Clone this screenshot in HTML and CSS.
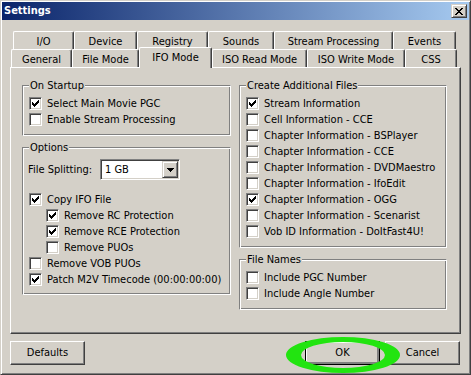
FILE: index.html
```html
<!DOCTYPE html>
<html lang="en">
<head>
    <meta charset="UTF-8">
    <title>Settings</title>
    <link rel="stylesheet" href="styles.css">
</head>
<body>
    <div class="window">
        <div class="titlebar">
            <span class="title">Settings</span>
            <span class="close-btn">
                <svg width="8" height="7" viewBox="0 0 8 7"><path d="M0 0h2v1H0zM6 0h2v1H6zM1 1h2v1H1zM5 1h2v1H5zM2 2h4v1H2zM3 3h2v1H3zM2 4h4v1H2zM1 5h2v1H1zM5 5h2v1H5zM0 6h2v1H0zM6 6h2v1H6z"/></svg>
            </span>
        </div>

        <div class="content">
            <div class="tabs">
                <div class="tab-row row-back">
                    <div class="tab" style="width:61px">I/O</div>
                    <div class="tab" style="width:63px">Device</div>
                    <div class="tab" style="width:71px">Registry</div>
                    <div class="tab" style="width:66px">Sounds</div>
                    <div class="tab" style="width:119px">Stream Processing</div>
                    <div class="tab" style="width:63px">Events</div>
                </div>
                <div class="tab-row row-front">
                    <div class="tab" style="width:61px">General</div>
                    <div class="tab" style="width:67px">File Mode</div>
                    <div class="tab active" style="width:73px">IFO Mode</div>
                    <div class="tab" style="width:95px">ISO Read Mode</div>
                    <div class="tab" style="width:98px">ISO Write Mode</div>
                    <div class="tab" style="width:52px">CSS</div>
                </div>
            </div>

            <div class="panel">
                <div class="column">
                    <div class="group">
                        <span class="group-label">On Startup</span>
                        <div class="check-row"><span class="checkbox"><svg viewBox="0 0 7 7"><path d="M0 2h1v3H0zM1 3h1v3H1zM2 4h1v3H2zM3 3h1v3H3zM4 2h1v3H4zM5 1h1v3H5zM6 0h1v3H6z"/></svg></span>Select Main Movie PGC</div>
                        <div class="check-row"><span class="checkbox"></span>Enable Stream Processing</div>
                    </div>

                    <div class="group options">
                        <span class="group-label">Options</span>
                        <div class="combo-row">
                            <span class="combo-label">File Splitting:</span>
                            <div class="combo">
                                <span class="combo-value">1 GB</span>
                                <span class="combo-btn">
                                    <svg width="7" height="4" viewBox="0 0 7 4"><path d="M0 0h7v1H0zM1 1h5v1H1zM2 2h3v1H2zM3 3h1v1H3z"/></svg>
                                </span>
                            </div>
                        </div>
                        <div class="check-row"><span class="checkbox"><svg viewBox="0 0 7 7"><path d="M0 2h1v3H0zM1 3h1v3H1zM2 4h1v3H2zM3 3h1v3H3zM4 2h1v3H4zM5 1h1v3H5zM6 0h1v3H6z"/></svg></span>Copy IFO File</div>
                        <div class="check-row sub"><span class="checkbox"><svg viewBox="0 0 7 7"><path d="M0 2h1v3H0zM1 3h1v3H1zM2 4h1v3H2zM3 3h1v3H3zM4 2h1v3H4zM5 1h1v3H5zM6 0h1v3H6z"/></svg></span>Remove RC Protection</div>
                        <div class="check-row sub"><span class="checkbox"><svg viewBox="0 0 7 7"><path d="M0 2h1v3H0zM1 3h1v3H1zM2 4h1v3H2zM3 3h1v3H3zM4 2h1v3H4zM5 1h1v3H5zM6 0h1v3H6z"/></svg></span>Remove RCE Protection</div>
                        <div class="check-row sub"><span class="checkbox"></span>Remove PUOs</div>
                        <div class="check-row"><span class="checkbox"></span>Remove VOB PUOs</div>
                        <div class="check-row"><span class="checkbox"><svg viewBox="0 0 7 7"><path d="M0 2h1v3H0zM1 3h1v3H1zM2 4h1v3H2zM3 3h1v3H3zM4 2h1v3H4zM5 1h1v3H5zM6 0h1v3H6z"/></svg></span>Patch M2V Timecode (00:00:00:00)</div>
                    </div>
                </div>

                <div class="column">
                    <div class="group right">
                        <span class="group-label">Create Additional Files</span>
                        <div class="check-row"><span class="checkbox"><svg viewBox="0 0 7 7"><path d="M0 2h1v3H0zM1 3h1v3H1zM2 4h1v3H2zM3 3h1v3H3zM4 2h1v3H4zM5 1h1v3H5zM6 0h1v3H6z"/></svg></span>Stream Information</div>
                        <div class="check-row"><span class="checkbox"></span>Cell Information - CCE</div>
                        <div class="check-row"><span class="checkbox"></span>Chapter Information - BSPlayer</div>
                        <div class="check-row"><span class="checkbox"></span>Chapter Information - CCE</div>
                        <div class="check-row"><span class="checkbox"></span>Chapter Information - DVDMaestro</div>
                        <div class="check-row"><span class="checkbox"></span>Chapter Information - IfoEdit</div>
                        <div class="check-row"><span class="checkbox"><svg viewBox="0 0 7 7"><path d="M0 2h1v3H0zM1 3h1v3H1zM2 4h1v3H2zM3 3h1v3H3zM4 2h1v3H4zM5 1h1v3H5zM6 0h1v3H6z"/></svg></span>Chapter Information - OGG</div>
                        <div class="check-row"><span class="checkbox"></span>Chapter Information - Scenarist</div>
                        <div class="check-row"><span class="checkbox"></span>Vob ID Information - DoItFast4U!</div>
                    </div>

                    <div class="group right">
                        <span class="group-label">File Names</span>
                        <div class="check-row"><span class="checkbox"></span>Include PGC Number</div>
                        <div class="check-row"><span class="checkbox"></span>Include Angle Number</div>
                    </div>
                </div>
            </div>

            <div class="buttons">
                <div class="button">Defaults</div>
                <div class="spacer"></div>
                <div class="button default">OK</div>
                <div class="button">Cancel</div>
            </div>
        </div>

        <!-- green marker drawn round the OK button -->
        <svg class="marker" width="120" height="42" viewBox="0 0 120 42">
            <path fill-rule="evenodd" d="M2 19a57 18 0 1 0 114 0a57 18 0 1 0 -114 0z M17 19a42 13 0 1 0 84 0a42 13 0 1 0 -84 0z"/>
        </svg>
    </div>
</body>
</html>
```

FILE: styles.css
```css
/* Windows 2000 style property sheet */

body {
    margin: 0;
    font-family: "DejaVu Sans Condensed", "DejaVu Sans", sans-serif;
    font-stretch: condensed;
    font-size: 11px;
    color: #000;
    background: #d4d0c8;
}

.window {
    position: relative;
    width: 471px;
    height: 375px;
    box-sizing: border-box;
    padding: 1px;
    background: #d4d0c8;
    border: 1px solid;
    border-color: #d4d0c8 #404040 #404040 #d4d0c8;
    box-shadow: inset 1px 1px #fff, inset -1px -1px #808080;
}

.titlebar {
    display: flex;
    align-items: flex-start;
    height: 18px;
    background: linear-gradient(to right, #0a246a, #a6caf0);
}

.title {
    flex: 1;
    padding-left: 2px;
    line-height: 18px;
    color: #fff;
    font-weight: bold;
}

.close-btn {
    display: flex;
    align-items: center;
    justify-content: center;
    width: 16px;
    height: 14px;
    margin: 2px 2px 0 0;
    box-sizing: border-box;
    background: #d4d0c8;
    border: 1px solid;
    border-color: #d4d0c8 #404040 #404040 #d4d0c8;
    box-shadow: inset 1px 1px #fff, inset -1px -1px #808080;
}

.close-btn svg {
    display: block;
    margin-top: 1px;
}

.content {
    padding: 0 8px;
}

/* tabs */

.tabs {
    margin-top: 11px;
}

.tab-row {
    display: flex;
    height: 18px;
}

.row-back {
    margin-left: 3px;
}

.row-front {
    margin-left: 1px;
}

.tab {
    box-sizing: border-box;
    height: 18px;
    border-top: 1px solid #fff;
    border-left: 1px solid #fff;
    border-right: 1px solid #404040;
    border-radius: 2px 2px 0 0;
    box-shadow: inset -1px 0 #808080;
    background: #d4d0c8;
    text-align: center;
    line-height: 16px;
    padding-top: 2px;
    white-space: nowrap;
}

.tab.active {
    position: relative;
    z-index: 1;
    height: 21px;
    margin-top: -2px;
    padding-top: 2px;
}

/* page panel */

.panel {
    display: grid;
    grid-template-columns: 209px 208px;
    column-gap: 8px;
    align-items: start;
    box-sizing: border-box;
    height: 267px;
    padding: 17px 11px 0 11px;
    border: 1px solid;
    border-color: #fff #404040 #404040 #fff;
    box-shadow: inset -1px -1px #808080;
}

.column {
    display: flex;
    flex-direction: column;
    gap: 11px;
}

/* etched group box: grey line with a white line inside it */
.group {
    position: relative;
    padding: 10px 6px 7px 6px;
    border: 1px solid;
    border-color: #808080 #fff #fff #808080;
    box-shadow: inset 1px 1px #fff, inset -1px -1px #808080;
}

.group.right {
    padding-left: 6px;
}

.group.options {
    padding-top: 11px;
    padding-bottom: 6px;
}

.group-label {
    position: absolute;
    top: -7px;
    left: 6px;
    padding: 0 1px;
    line-height: 13px;
    background: #d4d0c8;
}

.check-row {
    display: flex;
    align-items: flex-start;
    height: 16px;
    line-height: 16px;
    white-space: nowrap;
}

.check-row.sub {
    margin-left: 17px;
}

.checkbox {
    flex: none;
    width: 13px;
    height: 13px;
    margin: 1px 5px 0 0;
    box-sizing: border-box;
    background: #fff;
    border: 1px solid;
    border-color: #808080 #fff #fff #808080;
    box-shadow: inset 1px 1px #404040, inset -1px -1px #d4d0c8;
}

.checkbox svg {
    display: block;
    width: 7px;
    height: 7px;
    margin: 2px 0 0 2px;
}

/* combo box */

.combo-row {
    display: flex;
    align-items: center;
    height: 21px;
    margin-bottom: 12px;
}

.combo-label {
    width: 72px;
    margin-left: -1px;
}

.combo {
    display: flex;
    width: 80px;
    height: 21px;
    box-sizing: border-box;
    padding: 1px;
    background: #fff;
    border: 1px solid;
    border-color: #808080 #fff #fff #808080;
    box-shadow: inset 1px 1px #404040, inset -1px -1px #d4d0c8;
}

.combo-value {
    flex: 1;
    padding-left: 3px;
    line-height: 17px;
}

.combo-btn {
    display: flex;
    align-items: center;
    justify-content: center;
    width: 16px;
    height: 17px;
    box-sizing: border-box;
    background: #d4d0c8;
    border: 1px solid;
    border-color: #d4d0c8 #404040 #404040 #d4d0c8;
    box-shadow: inset 1px 1px #fff, inset -1px -1px #808080;
}

/* dialog buttons */

.buttons {
    display: flex;
    gap: 5px;
    margin-top: 7px;
    padding-right: 1px;
}

.spacer {
    flex: 1;
}

.button {
    width: 75px;
    height: 24px;
    box-sizing: border-box;
    border: 1px solid;
    border-color: #fff #404040 #404040 #fff;
    box-shadow: inset -1px -1px #808080;
    text-align: center;
    line-height: 22px;
}

.button.default {
    border-color: #000;
    box-shadow: inset 1px 1px #fff, inset -2px -2px #808080, inset -1px -1px #404040;
}

.marker {
    position: absolute;
    left: 283px;
    top: 335px;
    fill: #22e410;
}
```
